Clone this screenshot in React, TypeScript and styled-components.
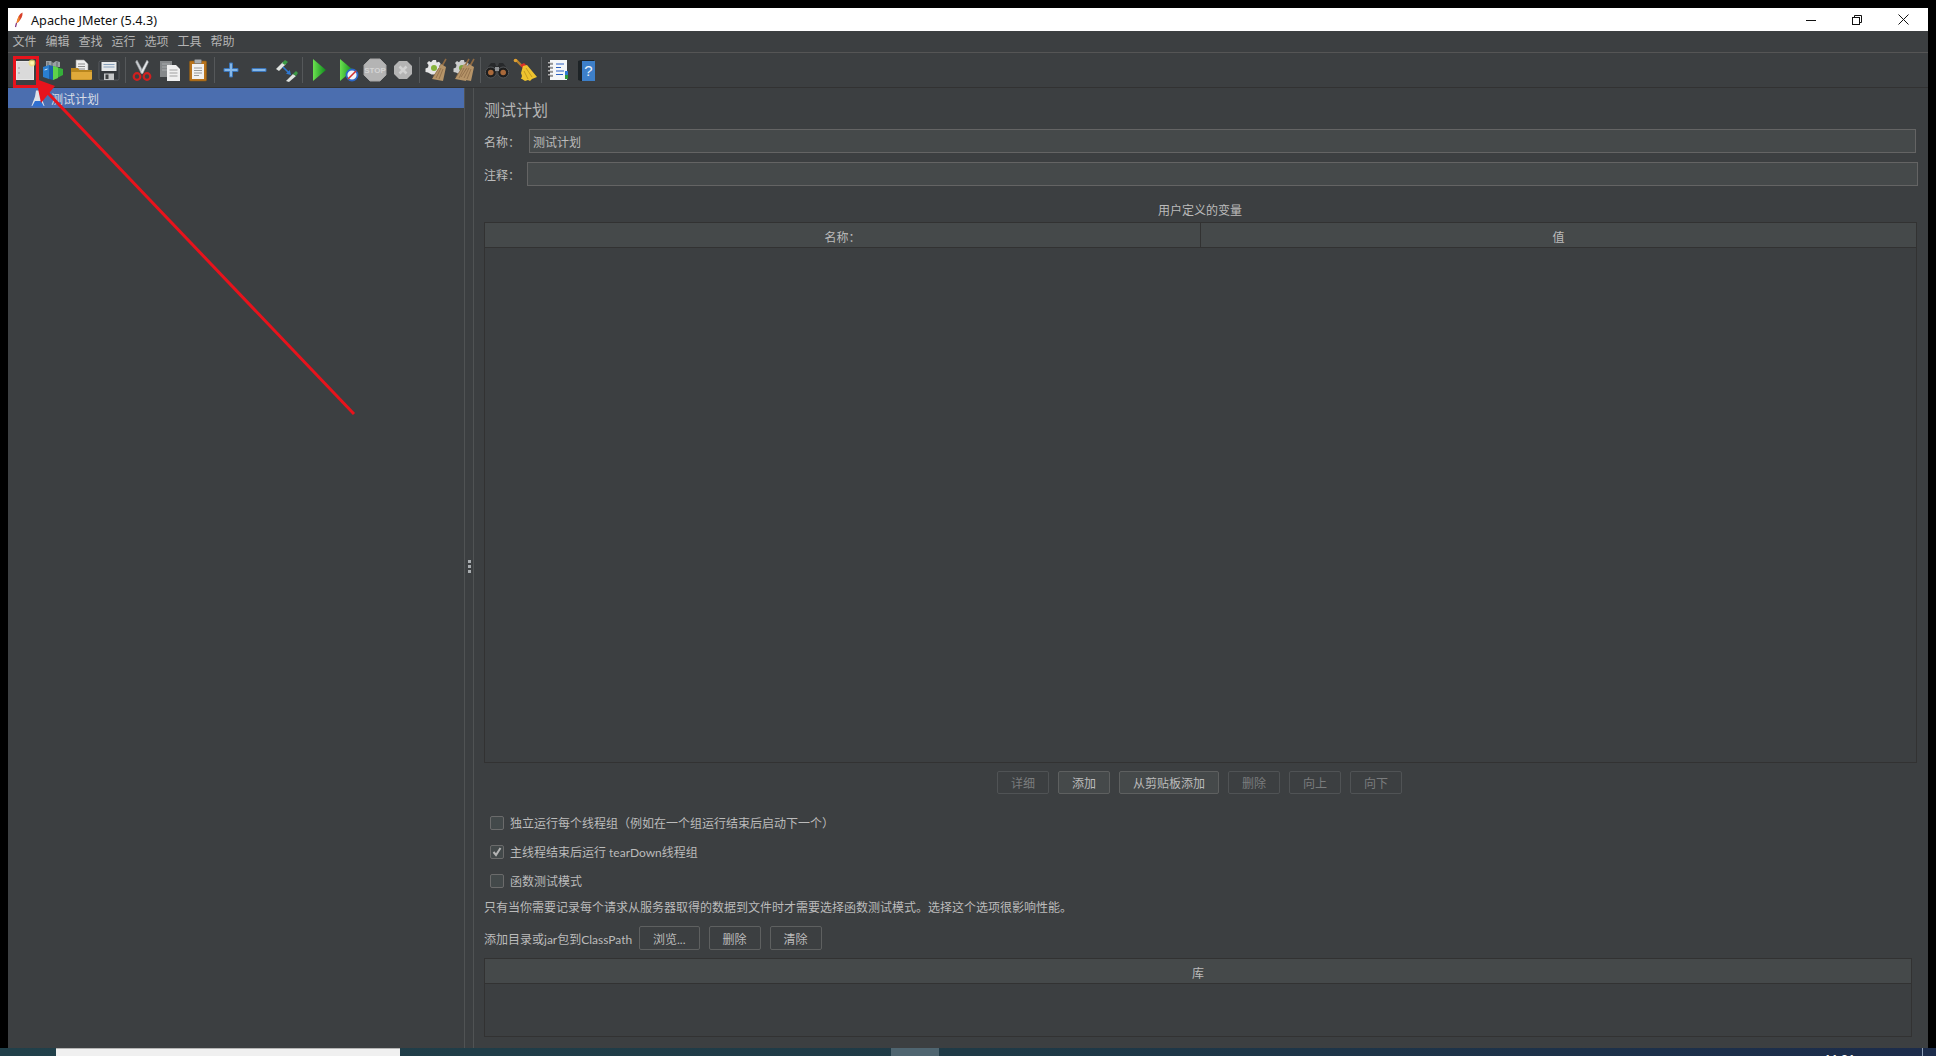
import React from 'react';
import styled, {createGlobalStyle} from 'styled-components';

const GlobalStyle = createGlobalStyle`
html, body {
  margin: 0;
  padding: 0;
  background: #000;
}
* {
  box-sizing: border-box;
}
`;

const uiFont = `Lato, "Noto Sans CJK SC", sans-serif`;

const Screen = styled.div`
position: relative;
width: 1936px;
height: 1056px;
overflow: hidden;
display: flex;
flex-direction: column;
background: #000;
padding-top: 8px;
font-family: ${uiFont};
font-size: 12px;
color: #bbbbbb;
`;
const Frame = styled.div`
flex: 1;
min-height: 0;
margin: 0 8px;
display: flex;
flex-direction: column;
background: #3c3f41;
`;
const TitleBar = styled.div`
height: 23px;
flex: none;
display: flex;
align-items: center;
background: #fff;
color: #111;
padding-left: 6px;
`;
const AppName = styled.span`
margin-left: 7px;
font-family: "Noto Sans", sans-serif;
font-size: 12.7px;
`;
const WindowButtons = styled.div`
margin-left: auto;
display: flex;
padding-right: 2px;
`;
const WindowButton = styled.div`
width: 46px;
height: 23px;
display: flex;
align-items: center;
justify-content: center;
`;
const MenuBar = styled.div`
height: 22px;
flex: none;
display: flex;
align-items: center;
border-bottom: 1px solid #555555;
`;
const MenuItem = styled.span`
width: 33px;
text-align: center;
line-height: 20px;
padding-top: 1px;
color: #b4b4b4;
`;
const ToolBar = styled.div`
height: 35px;
flex: none;
display: flex;
align-items: center;
padding-left: 3px;
border-bottom: 1px solid #323232;
`;
const ToolButton = styled.div`
width: 28px;
height: 34px;
display: flex;
align-items: center;
justify-content: center;
`;
const ToolSep = styled.div`
width: 4.800px;
height: 26px;
display: flex;
justify-content: center;
&::before {
  content: '';
  width: 1px;
  background: #55585a;
}
`;
const Body = styled.div`
flex: 1;
min-height: 0;
display: flex;
`;
const TreePane = styled.div`
width: 456px;
flex: none;
`;
const TreeRow = styled.div`
height: 20px;
display: flex;
align-items: center;
padding-left: 23px;
background: #4b6eaf;
color: #d8dde6;
`;
const TreeLabel = styled.span`
margin-left: 6px;
padding-top: 1px;
`;
const Splitter = styled.div`
width: 10px;
flex: none;
display: flex;
flex-direction: column;
align-items: center;
justify-content: center;
gap: 2px;
padding-bottom: 3px;
border-left: 1px solid #505354;
border-right: 1px solid #505354;
`;
const SplitDot = styled.i`
width: 3px;
height: 3px;
background: #a9adb0;
`;
const EditorPane = styled.div`
flex: 1;
min-width: 0;
display: flex;
flex-direction: column;
padding: 0 10px 11px;
`;
const PaneTitle = styled.div`
font-size: 16px;
line-height: 24px;
margin: 10px 0 7px;
color: #b4b4b4;
`;
const FieldRow = styled.div<{$top?: number; $right: number}>`
display: flex;
align-items: center;
height: 24px;
margin-top: ${p => p.$top ?? 0}px;
margin-right: ${p => p.$right}px;
`;
const FieldLabel = styled.label<{$w: number}>`
width: ${p => p.$w}px;
flex: none;
padding-top: 1px;
`;
const TextInput = styled.div`
flex: 1;
height: 24px;
line-height: 23px;
padding: 1px 0 0 3px;
background: #45494a;
border: 1px solid #646464;
color: #bbbbbb;
`;
const SectionTitle = styled.div`
margin-top: 14px;
padding-top: 1px;
height: 20px;
line-height: 20px;
text-align: center;
margin-left: -2px;
`;
const Table = styled.div<{$grow?: boolean; $right: number; $top: number}>`
display: flex;
flex-direction: column;
margin: ${p => p.$top}px ${p => p.$right}px 0 0;
border: 1px solid #323232;
${p => p.$grow ? 'flex: 1; min-height: 0;' : 'height: 79px; flex: none;'}
`;
const TableHead = styled.div`
height: 25px;
flex: none;
display: flex;
background: #45494a;
border-bottom: 1px solid #323232;
`;
const HeadCell = styled.div<{$divide?: boolean}>`
flex: 1;
display: flex;
align-items: center;
justify-content: center;
padding-top: 2px;
${p => p.$divide && 'border-right: 1px solid #323232;'}
`;
const ButtonBar = styled.div`
margin-top: 8px;
display: flex;
justify-content: center;
gap: 9px;
margin-right: 3px;
`;
const Btn = styled.div<{$state?: 'on' | 'off' | 'plain'}>`
height: ${p => p.$state === 'plain' ? 24 : 23}px;
display: flex;
align-items: center;
justify-content: center;
padding: 0 13px;
border-radius: 2px;
border: 1px solid ${p => p.$state === 'off' ? '#505355' : '#5e6060'};
background: ${p => p.$state === 'on' ? '#45494a' : '#3c3f41'};
color: ${p => p.$state === 'off' ? '#7a7c7d' : '#bbbbbb'};
`;
const ChecksList = styled.div`
margin-top: 14px;
`;
const CheckRow = styled.div`
height: 29px;
display: flex;
align-items: center;
padding-left: 6px;
`;
const CheckBox = styled.span<{$checked?: boolean}>`
width: 14px;
height: 14px;
flex: none;
display: flex;
align-items: center;
justify-content: center;
border: 1px solid #6b6b6b;
border-radius: 2px;
background: #43494a;
margin-right: 6px;
`;
const Note = styled.div`
margin-top: 1px;
line-height: 24px;
`;
const ClassPathRow = styled.div`
margin-top: 6px;
margin-bottom: 1px;
display: flex;
align-items: center;
gap: 9px;
`;
const ClassPathLabel = styled.span`
margin-right: -2px;
width: 148px;
white-space: nowrap;
`;
const TaskBar = styled.div`
height: 8px;
flex: none;
display: flex;
overflow: hidden;
padding-left: 56px;
background: linear-gradient(90deg, #21404a, #1f3a46 50%, #1c2c4b);
`;
const TaskActive = styled.div`
width: 344px;
background: #f0f0f0;
border-top: 1px solid #b5b5b5;
`;
const TaskBlock = styled.div`
width: 48px;
margin-left: 491px;
background: #4f6570;
`;
const Clock = styled.div`
margin-left: 885px;
color: #fff;
font-size: 12px;
font-weight: 700;
line-height: 16px;
padding-top: 3px;
`;
const DesktopEdge = styled.div`
width: 1px;
margin-left: 67px;
background: #8ea0b8;
`;
const Annotation = styled.svg`
position: absolute;
left: 0;
top: 0;
pointer-events: none;
`;

const I = ({children}: {children: React.ReactNode}) =>
    <svg width="24" height="24" viewBox="0 0 24 24">{children}</svg>;

const Feather = () => (
    <svg width="10" height="16" viewBox="0 0 10 16">
        <path d="M8.500 0.500C5 2 3.500 6 2.500 11L4.500 10C7 7 9 4 8.500 0.500Z" fill="#d8402a"/>
        <path d="M5 4C4 6 3 8 2.500 11L4.500 10C5.500 8 6 6 5 4Z" fill="#f08a2a"/>
        <path d="M2.500 11L1.500 15" stroke="#7a2a78" strokeWidth="1.200"/>
    </svg>
);

const NewIcon = () => <I>
    <rect x="3" y="3" width="18" height="19" fill="#e6e6e6"/>
    <rect x="4" y="4" width="16" height="17" fill="#dadada"/>
    <circle cx="6" cy="10" r=".7" fill="#8a8a8a"/>
    <circle cx="6" cy="15" r=".7" fill="#8a8a8a"/>
    <circle cx="19" cy="5" r="3.400" fill="#f3e27a" opacity=".75"/>
    <circle cx="19" cy="5" r="1.800" fill="#fdf7b0"/>
</I>;
const TemplatesIcon = () => <I>
    <path d="M5 3h5l2 2 3-2 4 1v5H5z" fill="#9aa0a4"/>
    <path d="M7 4v5M11 4v5M16 4v5" stroke="#5e6468" strokeWidth="1"/>
    <path d="M2 9l6-2v14l-6-2z" fill="#2a7fd0"/>
    <path d="M8 7l4 1v14l-4-1z" fill="#1b5fa8"/>
    <path d="M12 8l10 3v6l-10 5z" fill="#35b03a"/>
    <path d="M12 8l5 1.500V20l-5 2z" fill="#5fd24a"/>
    <path d="M3.500 12l3-1" stroke="#cfe6fa" strokeWidth="1"/>
</I>;
const OpenIcon = () => <I>
    <path d="M7 2h8l4 4v8H7z" fill="#eeeeee" stroke="#9a9a9a" strokeWidth=".6"/>
    <path d="M9 6h7M9 8.500h7M9 11h7" stroke="#8c8c8c" strokeWidth="1"/>
    <path d="M2 10h7l1.500 2H23v8.500a1.500 1.500 0 0 1-1.500 1.500h-18A1.500 1.500 0 0 1 2 20.500z" fill="#b8861e"/>
    <path d="M2.500 14h20.500v6.500a1 1 0 0 1-1 1H3.500a1 1 0 0 1-1-1z" fill="#e0a93a"/>
</I>;
const SaveIcon = () => <I>
    <rect x="2" y="3" width="20" height="19" rx="1.500" fill="#34383c" stroke="#6b7075" strokeWidth=".6"/>
    <rect x="4.500" y="4" width="15" height="9" fill="#e6e8ea"/>
    <path d="M6.500 6.500h11M6.500 9h11" stroke="#86a0bd" strokeWidth="1"/>
    <rect x="7" y="15.500" width="10" height="6.500" fill="#c4c6c8"/>
    <rect x="8.500" y="16.500" width="3" height="4.500" fill="#3c3f41"/>
</I>;
const CutIcon = () => <I>
    <path d="M7 2l6.500 12-2 2L5.500 4z" fill="#c8ccd0" stroke="#8a8e92" strokeWidth=".5"/>
    <path d="M17 2l-6.500 12 2 2 6-12z" fill="#e4e6e8" stroke="#8a8e92" strokeWidth=".5"/>
    <circle cx="7" cy="18.500" r="3.300" fill="none" stroke="#d01f1f" strokeWidth="2.200"/>
    <circle cx="17" cy="18.500" r="3.300" fill="none" stroke="#d01f1f" strokeWidth="2.200"/>
</I>;
const CopyIcon = () => <I>
    <path d="M2 3h12v16H2z" fill="#85888a"/>
    <path d="M4 6h8M4 9h8M4 12h8" stroke="#a8abad" strokeWidth="1"/>
    <path d="M9 7h9l4 4v12H9z" fill="#f0f0f0"/>
    <path d="M11.500 12h8M11.500 15h8M11.500 18h8" stroke="#a0a0a0" strokeWidth="1"/>
</I>;
const PasteIcon = () => <I>
    <rect x="3.500" y="3" width="17" height="20" rx="1" fill="#b8731c" stroke="#8a5a18" strokeWidth=".6"/>
    <path d="M6 6h12v15H6z" fill="#f2f2f2"/>
    <path d="M8 10h8M8 12.500h8M8 15h8M8 17.500h5" stroke="#9a9a9a" strokeWidth="1"/>
    <rect x="8.500" y="1.500" width="7" height="4" rx="1" fill="#a9acae" stroke="#6f7275" strokeWidth=".6"/>
</I>;
const PlusIcon = () => <I>
    <path d="M10.500 5h3v5.500H19v3h-5.500V19h-3v-5.500H5v-3h5.500z" fill="#86b8e8" stroke="#3a74b8"/>
</I>;
const MinusIcon = () => <I>
    <path d="M5 10.500h14v3H5z" fill="#86b8e8" stroke="#3a74b8"/>
</I>;
const ToggleIcon = () => <I>
    <path d="M1 11l7-7 3 2-7 7z" fill="#dfe3e0"/>
    <path d="M7 5l3-3 3 2-3 3z" fill="#3c9a46"/>
    <path d="M11 23l7-7 3 2-7 6z" fill="#dfe3e0"/>
    <path d="M18 16l3-3 2 2-2 3z" fill="#3c9a46"/>
    <path d="M8 9l6 6" stroke="#2f78d0" strokeWidth="1.600"/>
    <path d="M16 17l-5-1.200 3.800-3.800z" fill="#2f78d0"/>
</I>;
const StartIcon = () => <I>
    <defs>
        <linearGradient id="go" x1="0" y1="0" x2="1" y2="0">
            <stop offset="0" stopColor="#6be04f"/>
            <stop offset="1" stopColor="#0f8a1d"/>
        </linearGradient>
    </defs>
    <path d="M6 1l13 11L6 23z" fill="url(#go)"/>
</I>;
const NoPauseIcon = () => <I>
    <path d="M5 1l13 11L5 23z" fill="url(#go)"/>
    <circle cx="17" cy="17" r="5.500" fill="#f2f4f8" stroke="#2a66c8" strokeWidth="1.800"/>
    <path d="M13 21l8-8" stroke="#d03030" strokeWidth="1.600"/>
</I>;
const StopIcon = () => <I>
    <path d="M7 1h10l6 6v10l-6 6H7l-6-6V7z" fill="#b4b4b4" stroke="#a6a6a6"/>
    <text x="12" y="15" textAnchor="middle" fontSize="8" fontWeight="700" fill="#d4d4d4"
          fontFamily="Liberation Sans, sans-serif">STOP</text>
</I>;
const ShutdownIcon = () => <I>
    <path d="M8 3h8l5 5v8l-5 5H8l-5-5V8z" fill="#b4b4b4"/>
    <path d="M8.500 8.500l7 7M15.500 8.500l-7 7" stroke="#d2d2d2" strokeWidth="2.600"/>
</I>;
const Gear = () => <>
    <path d="M9 2h3l.6 2.500 2.400-.8 1.800 2.200-1.600 2 .8 2.400 2.500.6v3l-2.500.6-.8 2.400-2.600.8-1.600-1.200H7.500L4 14.500 1.500 14V10.500L4 9.500l.5-2.500L3 5l2-2 2 1.200z"
          fill="#e6e6e6"/>
    <circle cx="10" cy="10" r="3" fill="#86b33a"/>
</>;
const BroomBack = ({dx = 0}: {dx?: number}) => <g transform={`translate(${dx} 0)`}>
    <path d="M22 1l-4 7" stroke="#8f6a42" strokeWidth="1.600"/>
    <path d="M17 6l5 3-3 14-11-2z" fill="#b69468"/>
    <path d="M12 20l5-10M15 21l4-10M9 19l6-9" stroke="#8a6a46" strokeWidth=".8"/>
</g>;
const ClearIcon = () => <I><Gear/><BroomBack/></I>;
const ClearAllIcon = () => <I>
    <g opacity=".85"><Gear/></g>
    <BroomBack dx={-5}/>
    <BroomBack/>
</I>;
const SearchIcon = () => <I>
    <path d="M3 9l3-4h4l1 3h2l1-3h4l3 4 3 7H0z" fill="#27292b"/>
    <circle cx="5.800" cy="14.500" r="5.500" fill="#1e1e1e" stroke="#55585a"/>
    <circle cx="18.200" cy="14.500" r="5.500" fill="#1e1e1e" stroke="#55585a"/>
    <circle cx="5.800" cy="14.500" r="2.800" fill="#a9693a"/>
    <circle cx="18.200" cy="14.500" r="2.800" fill="#a9693a"/>
    <rect x="10" y="9" width="4" height="4" fill="#8f9295"/>
</I>;
const ResetIcon = () => <I>
    <path d="M3 2l6 6" stroke="#b9822c" strokeWidth="2.400"/>
    <circle cx="2.500" cy="2.500" r="1.800" fill="#e0a030"/>
    <path d="M7 7l4-2 3 3-3 4z" fill="#d8302a"/>
    <path d="M10 8l4-1 10 12-5 2-2 2-2-1-3 1-3-2-1 0 1-3-1-3z" fill="#eec32e"/>
    <path d="M11 13l4 8M13 10l6 9" stroke="#b98f1a" strokeWidth=".8"/>
</I>;
const FunctionIcon = () => <I>
    <rect x="4" y="2" width="17" height="20" fill="#f4f6f8"/>
    <rect x="19" y="13" width="3" height="4" fill="#2f78d0"/>
    <rect x="19" y="17" width="3" height="4" fill="#2e9a3a"/>
    <path d="M10 6h8M10 9.500h5M10 13h8M10 16.500h7" stroke="#2a5fc0" strokeWidth="1.200"/>
    <path d="M2 5h5M2 9h5M2 13h5M2 17h5" stroke="#d8d8d8" strokeWidth="1.600"/>
    <path d="M2 6h5M2 10h5M2 14h5M2 18h5" stroke="#222" strokeWidth=".8"/>
</I>;
const HelpIcon = () => <I>
    <path d="M4 3l3-1h13v21H7l-3-1z" fill="#1d2326"/>
    <rect x="8" y="3" width="13" height="20" fill="#3d7fc8"/>
    <text x="14.500" y="18" textAnchor="middle" fontSize="15" fill="#e8f0f8"
          fontFamily="Liberation Sans, sans-serif">?</text>
</I>;
const FlaskIcon = () => (
    <svg width="14" height="17" viewBox="0 0 14 17">
        <path d="M5 0.500h4l1 6 3.500 9.500H.5L4 6.500z" fill="#dfe3ea"/>
        <path d="M4 11h6l3 5.500H1z" fill="#2f6fd0"/>
    </svg>
);

const toolGroups: React.FC[][] = [
    [NewIcon, TemplatesIcon, OpenIcon, SaveIcon],
    [CutIcon, CopyIcon, PasteIcon],
    [PlusIcon, MinusIcon, ToggleIcon],
    [StartIcon, NoPauseIcon, StopIcon, ShutdownIcon],
    [ClearIcon, ClearAllIcon],
    [SearchIcon, ResetIcon],
    [FunctionIcon, HelpIcon],
];

const menus = ['文件', '编辑', '查找', '运行', '选项', '工具', '帮助'];

const bottomButtons: { label: string; state: 'on' | 'off' }[] = [
    {label: '详细', state: 'off'},
    {label: '添加', state: 'on'},
    {label: '从剪贴板添加', state: 'on'},
    {label: '删除', state: 'off'},
    {label: '向上', state: 'off'},
    {label: '向下', state: 'off'},
];

function App() {
    return (
        <Screen>
            <GlobalStyle/>
            <Frame>
                <TitleBar>
                    <Feather/>
                    <AppName>Apache JMeter (5.4.3)</AppName>
                    <WindowButtons>
                        <WindowButton>
                            <svg width="10" height="10"><path d="M0 5.500h10" stroke="#111"/></svg>
                        </WindowButton>
                        <WindowButton>
                            <svg width="10" height="10" fill="none" stroke="#111">
                                <rect x=".5" y="2.500" width="7" height="7"/>
                                <path d="M2.500 2.500v-2h7v7h-2"/>
                            </svg>
                        </WindowButton>
                        <WindowButton>
                            <svg width="11" height="11" stroke="#111"><path d="M.5 .5l10 10M10.500 .5l-10 10"/></svg>
                        </WindowButton>
                    </WindowButtons>
                </TitleBar>
                <MenuBar>
                    {menus.map(m => <MenuItem key={m}>{m}</MenuItem>)}
                </MenuBar>
                <ToolBar>
                    {toolGroups.map((group, i) =>
                        <React.Fragment key={i}>
                            {i > 0 && <ToolSep/>}
                            {group.map((Icon, j) => <ToolButton key={j}><Icon/></ToolButton>)}
                        </React.Fragment>
                    )}
                </ToolBar>
                <Body>
                    <TreePane>
                        <TreeRow>
                            <FlaskIcon/>
                            <TreeLabel>测试计划</TreeLabel>
                        </TreeRow>
                    </TreePane>
                    <Splitter>
                        <SplitDot/>
                        <SplitDot/>
                        <SplitDot/>
                    </Splitter>
                    <EditorPane>
                        <PaneTitle>测试计划</PaneTitle>
                        <FieldRow $right={2}>
                            <FieldLabel $w={45}>名称：</FieldLabel>
                            <TextInput>测试计划</TextInput>
                        </FieldRow>
                        <FieldRow $top={9} $right={0}>
                            <FieldLabel $w={43}>注释：</FieldLabel>
                            <TextInput/>
                        </FieldRow>
                        <SectionTitle>用户定义的变量</SectionTitle>
                        <Table $grow $top={2} $right={1}>
                            <TableHead>
                                <HeadCell $divide>名称：</HeadCell>
                                <HeadCell>值</HeadCell>
                            </TableHead>
                        </Table>
                        <ButtonBar>
                            {bottomButtons.map(b => <Btn key={b.label} $state={b.state}>{b.label}</Btn>)}
                        </ButtonBar>
                        <ChecksList>
                            <CheckRow>
                                <CheckBox/>
                                独立运行每个线程组（例如在一个组运行结束后启动下一个）
                            </CheckRow>
                            <CheckRow>
                                <CheckBox $checked>
                                    <svg width="10" height="10" fill="none" stroke="#b4b4b4" strokeWidth="2">
                                        <path d="M1.500 5l2.500 3 4.500-7"/>
                                    </svg>
                                </CheckBox>
                                主线程结束后运行 tearDown线程组
                            </CheckRow>
                            <CheckRow>
                                <CheckBox/>
                                函数测试模式
                            </CheckRow>
                        </ChecksList>
                        <Note>只有当你需要记录每个请求从服务器取得的数据到文件时才需要选择函数测试模式。选择这个选项很影响性能。</Note>
                        <ClassPathRow>
                            <ClassPathLabel>添加目录或jar包到ClassPath</ClassPathLabel>
                            <Btn $state="plain">浏览...</Btn>
                            <Btn $state="plain">删除</Btn>
                            <Btn $state="plain">清除</Btn>
                        </ClassPathRow>
                        <Table $top={7} $right={6}>
                            <TableHead>
                                <HeadCell>库</HeadCell>
                            </TableHead>
                        </Table>
                    </EditorPane>
                </Body>
            </Frame>
            <TaskBar>
                <TaskActive/>
                <TaskBlock/>
                <Clock>11:01</Clock>
                <DesktopEdge/>
            </TaskBar>
            <Annotation width="1936" height="1056">
                <rect x="14.500" y="57.500" width="23" height="29" fill="none" stroke="#e8131c" strokeWidth="3"/>
                <path d="M46 91L354 414" stroke="#e8131c" strokeWidth="3"/>
                <path d="M36 79L55 86L41 103z" fill="#e8131c"/>
            </Annotation>
        </Screen>
    );
}

export default App;
